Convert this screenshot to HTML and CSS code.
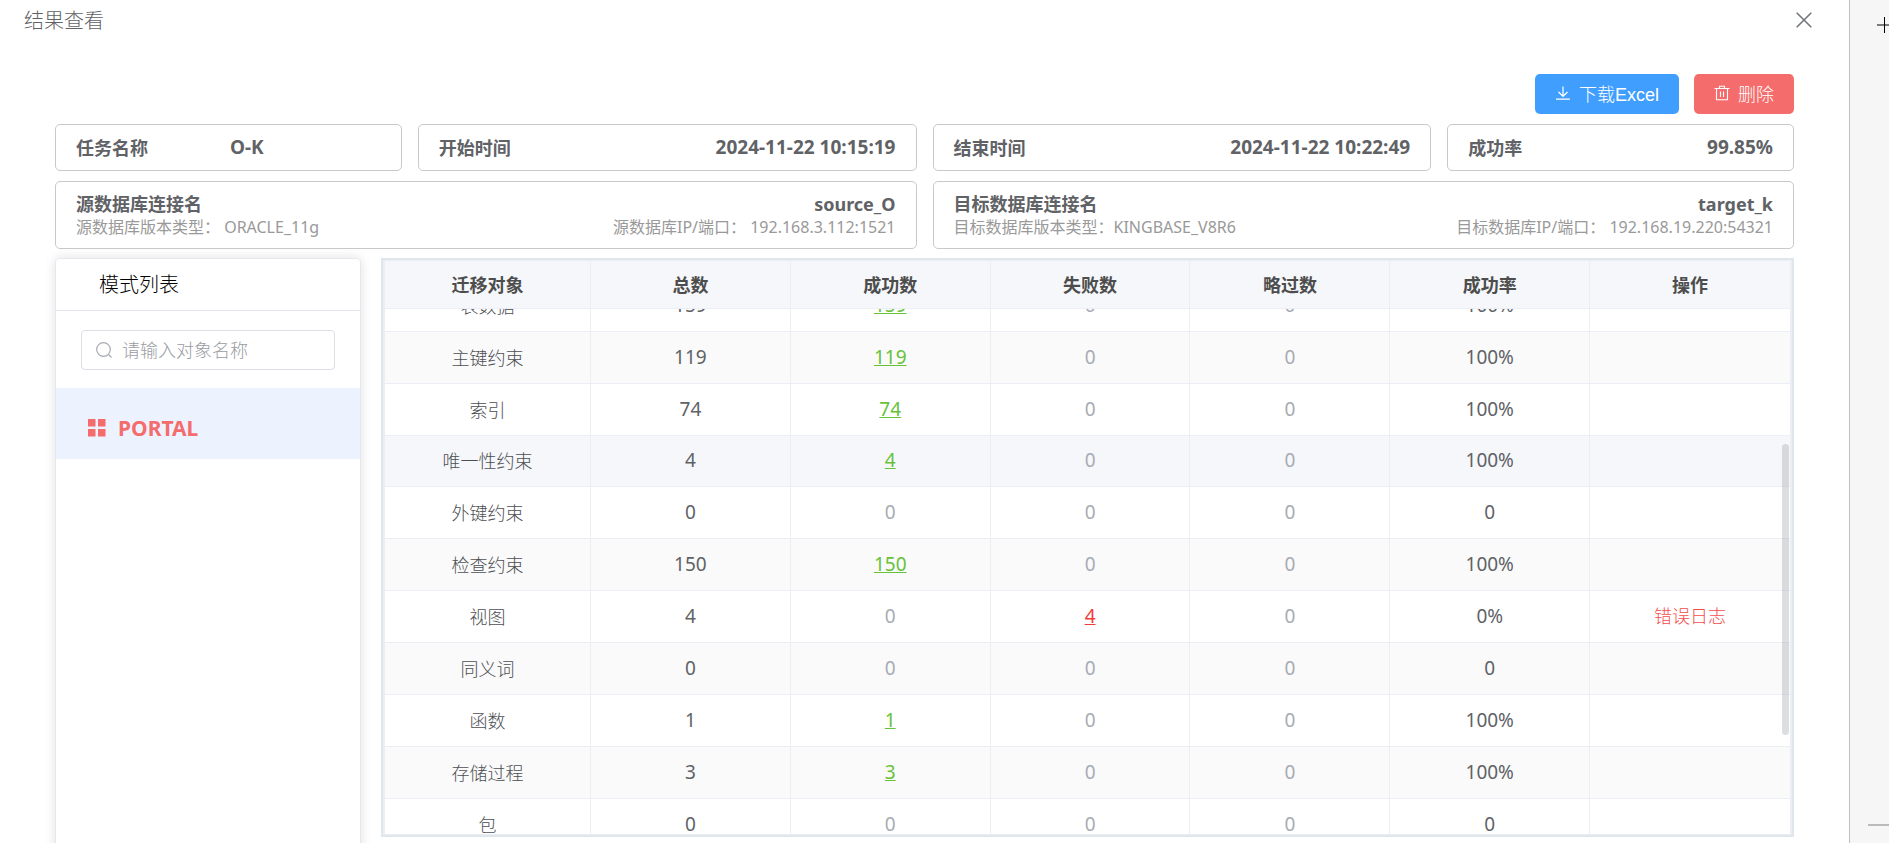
FILE: index.html
```
<!DOCTYPE html>
<html lang="zh">
<head>
    <meta charset="UTF-8">
    <meta name="viewport" content="width=device-width, initial-scale=1.0">
    <title>结果查看</title>
    <link rel="stylesheet" href="styles.css">
</head>
<body>
<div class="page">
    <main class="drawer">
        <header class="drawer-header">
            <span class="drawer-title">结果查看</span>
            <button class="close-btn" type="button" aria-label="关闭">
                <svg viewBox="0 0 16 16" width="16" height="16"><path d="M.7.7l14.6 14.6M15.3.7L.7 15.3" stroke="#73767a" stroke-width="1.6" fill="none"/></svg>
            </button>
        </header>

        <div class="drawer-body">
            <div class="toolbar">
                <button class="btn btn-primary" type="button">
                    <svg viewBox="0 0 16 16" width="16" height="16" fill="none" stroke="currentColor" stroke-width="1.2"><path d="M8 1.5v9.5M3.5 7L8 11.3 12.5 7M1 14.2h14"/></svg>
                    <span>下载Excel</span>
                </button>
                <button class="btn btn-danger" type="button">
                    <svg viewBox="0 0 16 16" width="16" height="16" fill="none" stroke="currentColor" stroke-width="1.1"><path d="M.5 3.5h15M5.5 3.5V1.2h5v2.3M2.5 3.5v11.2h11V3.5M6.5 6.5v5.5M9.5 6.5v5.5"/></svg>
                    <span>删除</span>
                </button>
            </div>

            <!-- 任务概要 -->
            <div class="info-row task-row">
                <div class="card task-name"><b>任务名称</b><b class="value">O-K</b></div>
                <div class="card"><b>开始时间</b><b class="value">2024-11-22 10:15:19</b></div>
                <div class="card"><b>结束时间</b><b class="value">2024-11-22 10:22:49</b></div>
                <div class="card"><b>成功率</b><b class="value">99.85%</b></div>
            </div>

            <!-- 数据库连接 -->
            <div class="info-row db-row">
                <div class="card db-card">
                    <div class="db-line"><b>源数据库连接名</b><b>source_O</b></div>
                    <div class="db-line db-sub">
                        <span>源数据库版本类型：&nbsp;ORACLE_11g</span>
                        <span>源数据库IP/端口：&nbsp;192.168.3.112:1521</span>
                    </div>
                </div>
                <div class="card db-card">
                    <div class="db-line"><b>目标数据库连接名</b><b>target_k</b></div>
                    <div class="db-line db-sub">
                        <span>目标数据库版本类型：KINGBASE_V8R6</span>
                        <span>目标数据库IP/端口：&nbsp;192.168.19.220:54321</span>
                    </div>
                </div>
            </div>

            <div class="content">
                <aside class="side">
                    <div class="side-title">模式列表</div>
                    <div class="side-search">
                        <label class="search-box">
                            <svg viewBox="0 0 16 16" width="16" height="16" fill="none" stroke="#a8abb2" stroke-width="1.2"><circle cx="7.5" cy="7.5" r="6.8"/><path d="M12.5 12.5l3 3"/></svg>
                            <input type="text" placeholder="请输入对象名称" aria-label="请输入对象名称">
                        </label>
                    </div>
                    <a class="side-item" href="#">
                        <svg viewBox="0 0 18 18" width="18" height="18" fill="currentColor"><path d="M0 0h7.5v7.5H0zM10 0h7.5v7.5H10zM0 10h7.5v7.5H0zM10 10h7.5v7.5H10z"/></svg>
                        <span>PORTAL</span>
                    </a>
                </aside>

                <div class="table-box">
                    <div class="table-scroll" id="table_scroll">
                        <table>
                            <colgroup>
                                <col class="col-name"><col><col><col><col><col><col>
                            </colgroup>
                            <thead>
                                <tr><th>迁移对象</th><th>总数</th><th>成功数</th><th>失败数</th><th>略过数</th><th>成功率</th><th>操作</th></tr>
                            </thead>
                            <tbody>
                                <tr><td>表数据</td><td>159</td><td><a class="ok" href="#">159</a></td><td class="none">0</td><td class="none">0</td><td>100%</td><td></td></tr>
                                <tr><td>主键约束</td><td>119</td><td><a class="ok" href="#">119</a></td><td class="none">0</td><td class="none">0</td><td>100%</td><td></td></tr>
                                <tr><td>索引</td><td>74</td><td><a class="ok" href="#">74</a></td><td class="none">0</td><td class="none">0</td><td>100%</td><td></td></tr>
                                <tr class="active"><td>唯一性约束</td><td>4</td><td><a class="ok" href="#">4</a></td><td class="none">0</td><td class="none">0</td><td>100%</td><td></td></tr>
                                <tr><td>外键约束</td><td>0</td><td class="none">0</td><td class="none">0</td><td class="none">0</td><td>0</td><td></td></tr>
                                <tr><td>检查约束</td><td>150</td><td><a class="ok" href="#">150</a></td><td class="none">0</td><td class="none">0</td><td>100%</td><td></td></tr>
                                <tr><td>视图</td><td>4</td><td class="none">0</td><td><a class="fail" href="#">4</a></td><td class="none">0</td><td>0%</td><td><a class="log" href="#">错误日志</a></td></tr>
                                <tr><td>同义词</td><td>0</td><td class="none">0</td><td class="none">0</td><td class="none">0</td><td>0</td><td></td></tr>
                                <tr><td>函数</td><td>1</td><td><a class="ok" href="#">1</a></td><td class="none">0</td><td class="none">0</td><td>100%</td><td></td></tr>
                                <tr><td>存储过程</td><td>3</td><td><a class="ok" href="#">3</a></td><td class="none">0</td><td class="none">0</td><td>100%</td><td></td></tr>
                                <tr><td>包</td><td>0</td><td class="none">0</td><td class="none">0</td><td class="none">0</td><td>0</td><td></td></tr>
                            </tbody>
                        </table>
                    </div>
                    <div class="scroll-thumb"></div>
                </div>
            </div>
        </div>
    </main>

    <div class="edge">
        <svg viewBox="0 0 16 16" width="16" height="16"><path d="M7.5 0v16M0 8h16" stroke="#000" stroke-width="1" fill="none"/></svg>
        <div class="edge-line"></div>
    </div>
</div>

<script>
    // 首行滚动到表头下方
    document.getElementById('table_scroll').scrollTop = 29;
</script>
</body>
</html>
```
FILE: styles.css
```
* {
    box-sizing: border-box;
}

body {
    margin: 0;
    font-family: "Noto Sans", "Noto Sans CJK SC", sans-serif;
    font-size: 18px;
    color: #606266;
    background-color: #fff;
}

button, input {
    font-family: inherit;
}

a {
    color: inherit;
}

.page {
    display: flex;
    height: 100vh;
    overflow: hidden;
}

.drawer {
    flex: 1;
    min-width: 0;
    display: flex;
    flex-direction: column;
}

.drawer-header {
    display: flex;
    justify-content: space-between;
    align-items: center;
    height: 39px;
    padding: 0 37px 0 24px;
}

.drawer-title {
    font-size: 20px;
    font-weight: 300;
    color: #606266;
}

.close-btn {
    display: flex;
    padding: 0;
    border: none;
    background: none;
    cursor: pointer;
}

.drawer-body {
    flex: 1;
    min-height: 0;
    display: flex;
    flex-direction: column;
    padding: 35px 55px 0;
}

.toolbar {
    display: flex;
    justify-content: flex-end;
    gap: 15px;
    margin-bottom: 10px;
}

.btn {
    display: flex;
    align-items: center;
    gap: 8px;
    height: 40px;
    padding: 0 20px 2px;
    border: none;
    border-radius: 5px;
    font-family: "Liberation Sans", "Noto Sans CJK SC", sans-serif;
    font-size: 18px;
    font-weight: 300;
    color: #fff;
    cursor: pointer;
}

.btn-primary {
    background-color: #409eff;
}

.btn-danger {
    background-color: #f56c6c;
}

/* 信息卡片 */
.info-row {
    display: grid;
    gap: 16px;
    margin-bottom: 10px;
}

.task-row {
    grid-template-columns: 347fr 499fr 499fr 347fr;
}

.db-row {
    grid-template-columns: 1fr 1fr;
    margin-bottom: 9px;
}

.card {
    display: flex;
    justify-content: space-between;
    align-items: center;
    height: 47px;
    padding: 0 20px 2px;
    border: 1px solid #c8c9cc;
    border-radius: 5px;
}

.value {
    font-size: 19px;
}

.task-name {
    justify-content: flex-start;
    gap: 82px;
}

.db-card {
    flex-direction: column;
    justify-content: center;
    align-items: stretch;
    height: 68px;
    padding-bottom: 0;
}

.db-line {
    display: flex;
    justify-content: space-between;
    line-height: 24px;
}

.db-sub {
    font-size: 16px;
    line-height: 22px;
    color: #999;
}

/* 下方内容 */
.content {
    flex: 1;
    min-height: 0;
    display: flex;
    gap: 20px;
}

.side {
    flex: none;
    width: 306px;
    height: 640px;
    border: 1px solid #e4e7ed;
    border-radius: 4px;
    box-shadow: 0 0 12px rgba(0, 0, 0, 0.12);
}

.side-title {
    height: 52px;
    padding-left: 43px;
    border-bottom: 1px solid #e4e7ed;
    font-size: 20px;
    font-weight: 300;
    line-height: 51px;
    color: #000;
}

.side-search {
    padding: 19px 25px 18px;
}

.search-box {
    display: flex;
    align-items: center;
    gap: 10px;
    height: 40px;
    padding: 0 14px;
    border: 1px solid #dcdfe6;
    border-radius: 4px;
}

.search-box input {
    flex: 1;
    min-width: 0;
    padding: 0;
    border: none;
    outline: none;
    font-size: 18px;
    font-weight: 300;
}

.search-box input::placeholder {
    color: #999ca3;
}

.side-item {
    display: flex;
    align-items: center;
    gap: 12px;
    height: 71px;
    padding: 8px 32px 0;
    background-color: #ecf3ff;
    font-size: 21px;
    font-weight: bold;
    color: #f56c6c;
    text-decoration: none;
}

/* 结果表格 */
.table-box {
    position: relative;
    flex: 1;
    min-width: 0;
    margin-bottom: 6px;
    border: 2px solid #dfe6ec;
}

.table-scroll {
    height: 100%;
    border: solid #ebeef5;
    border-width: 1px 2px;
    overflow-y: auto;
    scrollbar-width: none;
}

.scroll-thumb {
    position: absolute;
    top: 184px;
    right: 3px;
    width: 7px;
    height: 291px;
    border-radius: 4px;
    background-color: rgba(144, 147, 153, 0.3);
}

table {
    width: 100%;
    table-layout: fixed;
    border-collapse: separate;
    border-spacing: 0;
}

.col-name {
    width: 206px;
}

th, td {
    padding: 0 0 2px;
    border-right: 1px solid #ebeef5;
    border-bottom: 1px solid #ebeef5;
    text-align: center;
}

th:last-child, td:last-child {
    border-right: none;
}

th {
    position: sticky;
    top: 0;
    height: 48px;
    background-color: #f5f7fa;
    color: #4d4d4d;
}

td {
    height: 52px;
    font-size: 19px;
}

td:first-child {
    font-size: 18px;
    font-weight: 300;
    color: #4d4f53;
}

tbody tr:nth-child(even) {
    background-color: #fafafa;
}

tbody tr.active {
    background-color: #f5f7fa;
}

tr.active td {
    height: 51px;
}

.none {
    color: #a8abb2;
}

.ok {
    color: #67c23a;
}

.fail {
    color: #f03c3c;
}

.log {
    font-size: 18px;
    font-weight: 300;
    color: #f34d4d;
    text-decoration: none;
}

/* 右侧边缘 */
.edge {
    flex: none;
    display: flex;
    flex-direction: column;
    justify-content: space-between;
    align-items: flex-end;
    width: 40px;
    padding: 17px 0;
    border-left: 1px solid #c0c0c0;
    background-color: #f6f6f6;
    overflow: hidden;
}

.edge svg {
    margin-right: -4px;
}

.edge-line {
    width: 21px;
    height: 2px;
    background-color: #bbb;
}
```
